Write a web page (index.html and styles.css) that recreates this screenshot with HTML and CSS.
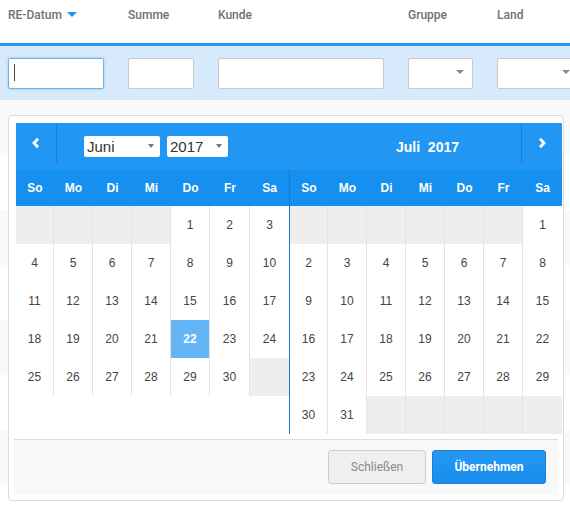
FILE: index.html
```html
<!DOCTYPE html>
<html lang="de">
<head>
<meta charset="utf-8">
<title>RE-Datum Filter</title>
<link rel="stylesheet" href="styles.css">
</head>
<body>
<div class="page">
  <div class="head">
    <div class="hc c1">RE-Datum<span class="sort"></span></div>
    <div class="hc c2">Summe</div>
    <div class="hc c3">Kunde</div>
    <div class="hc c4">Gruppe</div>
    <div class="hc c5">Land</div>
  </div>
  <div class="filters">
    <div class="fc c1"><div class="inp focus w1"><span class="cursor"></span></div></div>
    <div class="fc c2"><div class="inp w2"></div></div>
    <div class="fc c3"><div class="inp w3"></div></div>
    <div class="fc c4"><div class="inp sel-inp w4"></div></div>
    <div class="fc c5"><div class="inp sel-inp w5"></div></div>
  </div>
  <div class="rows">
    <div class="row"></div><div class="row"></div><div class="row"></div><div class="row"></div>
    <div class="row"></div><div class="row"></div><div class="row"></div><div class="row"></div>
  </div>

  <div class="picker">
    <div class="cals">
      <div class="cal cal-l">
        <div class="nav">
          <div class="navbtn prev">
            <svg width="10" height="12" viewBox="0 0 10 12"><polyline points="7,1.8 3,6 7,10.2" fill="none" stroke="#fff" stroke-width="2.8"/></svg>
          </div>
          <div class="msel month">Juni<span class="mcaret"></span></div>
          <div class="msel year">2017<span class="mcaret"></span></div>
        </div>
        <div class="tbl tbl-l">
          <div class="dow"><div>So</div><div>Mo</div><div>Di</div><div>Mi</div><div>Do</div><div>Fr</div><div>Sa</div></div>
          <div class="days">
            <div class="d e"></div><div class="d e"></div><div class="d e"></div><div class="d e"></div><div class="d">1</div><div class="d">2</div><div class="d">3</div>
            <div class="d">4</div><div class="d">5</div><div class="d">6</div><div class="d">7</div><div class="d">8</div><div class="d">9</div><div class="d">10</div>
            <div class="d">11</div><div class="d">12</div><div class="d">13</div><div class="d">14</div><div class="d">15</div><div class="d">16</div><div class="d">17</div>
            <div class="d">18</div><div class="d">19</div><div class="d">20</div><div class="d">21</div><div class="d today">22</div><div class="d">23</div><div class="d">24</div>
            <div class="d">25</div><div class="d">26</div><div class="d">27</div><div class="d">28</div><div class="d">29</div><div class="d">30</div><div class="d e"></div>
          </div>
        </div>
      </div>
      <div class="cal cal-r">
        <div class="nav">
          <div class="title">Juli&nbsp;&nbsp;2017</div>
          <div class="navbtn next">
            <svg width="10" height="12" viewBox="0 0 10 12"><polyline points="3,1.8 7,6 3,10.2" fill="none" stroke="#fff" stroke-width="2.8"/></svg>
          </div>
        </div>
        <div class="tbl tbl-r">
          <div class="dow"><div>So</div><div>Mo</div><div>Di</div><div>Mi</div><div>Do</div><div>Fr</div><div>Sa</div></div>
          <div class="days">
            <div class="d e"></div><div class="d e"></div><div class="d e"></div><div class="d e"></div><div class="d e"></div><div class="d e"></div><div class="d">1</div>
            <div class="d">2</div><div class="d">3</div><div class="d">4</div><div class="d">5</div><div class="d">6</div><div class="d">7</div><div class="d">8</div>
            <div class="d">9</div><div class="d">10</div><div class="d">11</div><div class="d">12</div><div class="d">13</div><div class="d">14</div><div class="d">15</div>
            <div class="d">16</div><div class="d">17</div><div class="d">18</div><div class="d">19</div><div class="d">20</div><div class="d">21</div><div class="d">22</div>
            <div class="d">23</div><div class="d">24</div><div class="d">25</div><div class="d">26</div><div class="d">27</div><div class="d">28</div><div class="d">29</div>
            <div class="d">30</div><div class="d">31</div><div class="d e"></div><div class="d e"></div><div class="d e"></div><div class="d e"></div><div class="d e"></div>
          </div>
        </div>
      </div>
    </div>
    <div class="footer">
      <div class="btn close">Schließen</div>
      <div class="btn apply">Übernehmen</div>
    </div>
  </div>
</div>
</body>
</html>
```

FILE: styles.css
```css
* { box-sizing: border-box; margin: 0; padding: 0; }
html, body { margin: 0; background: #fff; }
body { width: 570px; height: 507px; overflow: hidden; font-family: Roboto, "Liberation Sans", sans-serif; }
.page { position: relative; width: 570px; height: 507px; overflow: hidden; }

.head {
  display: flex; height: 46px; padding: 7px 0 0 8px;
  border-bottom: 3px solid #2196f3;
  font-size: 12px; font-weight: 500; line-height: 16px; color: #707070;
}
.c1 { width: 120px; flex: none; }
.c2 { width: 90px; flex: none; }
.c3 { width: 190px; flex: none; }
.c4 { width: 89px; flex: none; }
.c5 { flex: 1; }
.sort {
  display: inline-block; margin-left: 5px; vertical-align: 2px;
  border-left: 5px solid transparent; border-right: 5px solid transparent;
  border-top: 5px solid #2196f3;
}

.filters { display: flex; height: 54px; padding: 12px 0 0 8px; background: #d6eafb; }
.inp { position: relative; height: 31px; background: #fff; border: 1px solid #c9c9c9; border-radius: 2px; }
.inp.focus { border-color: #6cb3ec; box-shadow: 0 0 3px rgba(100, 170, 235, 0.55); }
.w1 { width: 96px; }
.w2 { width: 66px; }
.w3 { width: 166px; }
.w4 { width: 65px; }
.w5 { width: 82px; }
.cursor { position: absolute; left: 5px; top: 5px; width: 1px; height: 17px; background: #444; }
.sel-inp::after {
  content: ""; position: absolute; right: 8px; top: 11px;
  border-left: 4px solid transparent; border-right: 4px solid transparent;
  border-top: 4px solid #8a8a8a;
}

.rows { display: flex; flex-direction: column; }
.row { height: 55px; }
.row:nth-child(odd) { background: #f9f9f9; }

.picker {
  position: absolute; left: 8px; top: 115px; width: 556px; height: 386px;
  background: #fff; border: 1px solid #dcdcdc; border-radius: 4px;
  padding: 7px 0 0 5px;
}
.cals { display: flex; margin-left: 2px; }
.cal-l { width: 274px; }
.cal-r { width: 272px; }
.nav { display: flex; align-items: flex-start; height: 47px; background: #2196f3; }
.navbtn { display: flex; align-items: center; justify-content: center; width: 41px; height: 40px; flex: none; }
.prev { border-right: 1px solid #1a80d8; }
.next { border-left: 1px solid #1a80d8; }
.msel {
  position: relative; margin-top: 13px; height: 21px; padding-left: 3px;
  background: #fff; border-radius: 2px;
  font-family: "Liberation Sans", Arial, sans-serif; font-size: 15px; line-height: 21px; color: #333;
}
.month { width: 76px; margin-left: 27px; }
.year { width: 61px; margin-left: 7px; }
.mcaret {
  position: absolute; right: 6px; top: 8px;
  border-left: 3.5px solid transparent; border-right: 3.5px solid transparent;
  border-top: 4px solid #777;
}
.title {
  flex: 1; padding: 16px 0 0 44px; text-align: center;
  font-family: "Liberation Sans", Arial, sans-serif; font-size: 14px; font-weight: bold;
  line-height: 16px; color: #fff;
}

.tbl-l { border-right: 1px solid #1976d2; }
.tbl-l .dow, .tbl-l .days { grid-template-columns: 38px 39px 39px 39px 39px 40px 39px; }
.tbl-r .dow, .tbl-r .days { grid-template-columns: 38px 39px 39px 39px 39px 39px 39px; }
.dow {
  display: grid; height: 36px; align-items: center; text-align: center;
  background: #1590f0; color: #fff;
  font-family: "Liberation Sans", Arial, sans-serif; font-size: 12px; font-weight: bold;
}
.days { display: grid; grid-auto-rows: 38px; height: 228px; align-content: start; }
.d {
  display: flex; align-items: center; justify-content: center;
  border-right: 1px solid #e4e4e4;
  font-family: "Liberation Sans", Arial, sans-serif; font-size: 12px; color: #444;
}
.d:nth-child(7n) { border-right: none; }
.d.e { background: #eeeeee; }
.d.today { background: #64b5f6; color: #fff; font-weight: bold; }

.footer {
  display: flex; justify-content: flex-end; gap: 6px;
  width: 544px; height: 56px; margin-top: 5px; padding: 10px 12px 0 0;
  background: #f8f8f8; border-top: 1px solid #dedede;
}
.btn {
  display: flex; align-items: center; justify-content: center;
  height: 34px; border-radius: 3px; font-size: 12px;
}
.close { width: 98px; background: #efefef; border: 1px solid #cecece; color: #8a8a8a; }
.apply {
  width: 114px; background: linear-gradient(#2399f4, #1a8cec); border: 1px solid #1a7fd6;
  color: #fff; font-weight: bold;
}
```
